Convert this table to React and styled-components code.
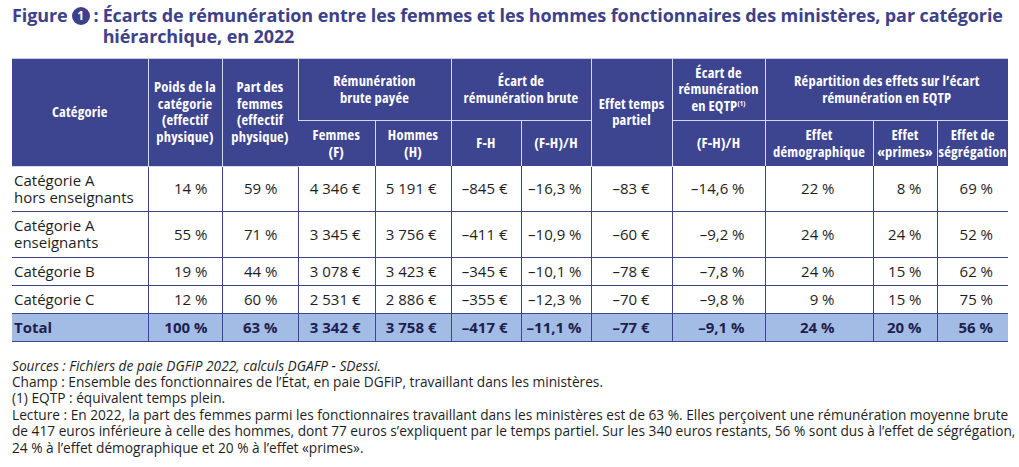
import styled, { createGlobalStyle } from "styled-components";

const NAVY = "#3d4490";
const TITLE = "#3d4189";

const GlobalStyle = createGlobalStyle`
  html, body {
    margin: 0;
    padding: 0;
    background: #ffffff;
  }
  body {
    font-family: "Open Sans", "Noto Sans", sans-serif;
    color: #1e1e1e;
  }
`;

const Page = styled.div`
  width: 1019px;
  height: 467px;
  padding: 5px 12px 0 12px;
  box-sizing: border-box;
  overflow: hidden;
`;

const Title = styled.h1`
  display: flex;
  margin: 0;
  font-size: 18px;
  line-height: 21px;
  font-weight: 700;
  color: ${TITLE};
  letter-spacing: -0.1px;
  white-space: nowrap;
`;

const TitleLabel = styled.span`
  display: flex;
  align-items: flex-start;
  gap: 4px;
  flex-shrink: 0;
`;

const Badge = styled.span`
  display: inline-flex;
  align-items: center;
  justify-content: center;
  width: 18px;
  height: 18px;
  margin-top: 2px;
  border-radius: 50%;
  background: ${TITLE};
  color: #ffffff;
  font-size: 12px;
  line-height: 1;
`;

const TitleText = styled.span`
  padding-left: 4px;
`;

const Table = styled.table`
  margin-top: 11px;
  width: 996px;
  border-collapse: collapse;
  table-layout: fixed;
`;

const HeadCell = styled.th`
  background: ${NAVY};
  color: #ffffff;
  font-family: "Open Sans", "DejaVu Sans", sans-serif;
  font-stretch: 80%;
  font-weight: 700;
  font-size: 14.5px;
  line-height: 16.5px;
  letter-spacing: 0.2px;
  text-align: center;
  vertical-align: middle;
  white-space: nowrap;
  padding: 0 1px;
  border-left: 1px solid #d5d8ee;
  border-top: 1px solid #c9cce6;
  border-bottom: ${(p) => (p.$sub ? "none" : "1px solid #d5d8ee")};
  height: ${(p) => p.$h || "auto"};

  &:first-child {
    border-left: none;
  }
`;

const Sup = styled.sup`
  font-size: 7px;
  line-height: 0;
  vertical-align: 5px;
`;

const Row = styled.tr`
  background: ${(p) => (p.$total ? "#a3bce5" : "#ffffff")};
  font-weight: ${(p) => (p.$total ? 700 : 400)};
  color: ${(p) => (p.$total ? "#1d1f4e" : "#1e1e1e")};
`;

const Cell = styled.td`
  height: ${(p) => p.$h}px;
  padding: 0 ${(p) => p.$pr}px 0 4px;
  font-size: 15px;
  line-height: 17px;
  text-align: ${(p) => (p.$left ? "left" : "right")};
  vertical-align: middle;
  white-space: nowrap;
  border-left: 1px solid ${NAVY};
  border-bottom: 1px solid ${NAVY};
  box-sizing: border-box;

  &:first-child {
    border-left: none;
    padding-left: 2px;
  }
`;

const Notes = styled.div`
  margin-top: 16px;
  font-size: 13.7px;
  line-height: 16.4px;
  color: #1e1e1e;
`;

const Note = styled.p`
  margin: 0;
  white-space: nowrap;
  font-style: ${(p) => (p.$italic ? "italic" : "normal")};
`;

const widths = [136, 74, 76, 77, 76, 70, 70, 81, 93, 108, 64, 71];
const pads = [0, 14, 20, 14, 14, 13, 9, 22, 20, 38, 15, 15];

const rows = [
  { h: 45, cells: [["Catégorie A", "hors enseignants"], "14 %", "59 %", "4 346 €", "5 191 €", "–845 €", "–16,3 %", "–83 €", "–14,6 %", "22 %", "8 %", "69 %"] },
  { h: 46, cells: [["Catégorie A", "enseignants"], "55 %", "71 %", "3 345 €", "3 756 €", "–411 €", "–10,9 %", "–60 €", "–9,2 %", "24 %", "24 %", "52 %"] },
  { h: 28, cells: ["Catégorie B", "19 %", "44 %", "3 078 €", "3 423 €", "–345 €", "–10,1 %", "–78 €", "–7,8 %", "24 %", "15 %", "62 %"] },
  { h: 28, cells: ["Catégorie C", "12 %", "60 %", "2 531 €", "2 886 €", "–355 €", "–12,3 %", "–70 €", "–9,8 %", "9 %", "15 %", "75 %"] },
  { h: 28, total: true, cells: ["Total", "100 %", "63 %", "3 342 €", "3 758 €", "–417 €", "–11,1 %", "–77 €", "–9,1 %", "24 %", "20 %", "56 %"] },
];

export default function App() {
  return (
    <Page>
      <GlobalStyle />
      <Title>
        <TitleLabel>
          Figure <Badge>1</Badge> :
        </TitleLabel>
        <TitleText>
          Écarts de rémunération entre les femmes et les hommes fonctionnaires des ministères, par catégorie
          <br />
          hiérarchique, en 2022
        </TitleText>
      </Title>

      <Table>
        <colgroup>
          {widths.map((w, i) => (
            <col key={i} style={{ width: w }} />
          ))}
        </colgroup>
        <thead>
          <tr>
            <HeadCell rowSpan={2}>Catégorie</HeadCell>
            <HeadCell rowSpan={2}>
              Poids de la
              <br />
              catégorie
              <br />
              (effectif
              <br />
              physique)
            </HeadCell>
            <HeadCell rowSpan={2}>
              Part des
              <br />
              femmes
              <br />
              (effectif
              <br />
              physique)
            </HeadCell>
            <HeadCell colSpan={2} $h="61px">
              Rémunération
              <br />
              brute payée
            </HeadCell>
            <HeadCell colSpan={2}>
              Écart de
              <br />
              rémunération brute
            </HeadCell>
            <HeadCell rowSpan={2}>
              Effet temps
              <br />
              partiel
            </HeadCell>
            <HeadCell>
              Écart de
              <br />
              rémunération
              <br />
              en EQTP<Sup>(1)</Sup>
            </HeadCell>
            <HeadCell colSpan={3}>
              Répartition des effets sur l’écart
              <br />
              rémunération en EQTP
            </HeadCell>
          </tr>
          <tr>
            <HeadCell $sub $h="45px">
              Femmes
              <br />
              (F)
            </HeadCell>
            <HeadCell $sub>
              Hommes
              <br />
              (H)
            </HeadCell>
            <HeadCell $sub>F-H</HeadCell>
            <HeadCell $sub>(F-H)/H</HeadCell>
            <HeadCell $sub>(F-H)/H</HeadCell>
            <HeadCell $sub>
              Effet
              <br />
              démographique
            </HeadCell>
            <HeadCell $sub>
              Effet
              <br />
              «primes»
            </HeadCell>
            <HeadCell $sub>
              Effet de
              <br />
              ségrégation
            </HeadCell>
          </tr>
        </thead>
        <tbody>
          {rows.map((r, ri) => (
            <Row key={ri} $total={r.total}>
              {r.cells.map((c, ci) => (
                <Cell key={ci} $h={r.h} $pr={pads[ci]} $left={ci === 0}>
                  {Array.isArray(c) ? (
                    <>
                      {c[0]}
                      <br />
                      {c[1]}
                    </>
                  ) : (
                    c
                  )}
                </Cell>
              ))}
            </Row>
          ))}
        </tbody>
      </Table>

      <Notes>
        <Note $italic>Sources : Fichiers de paie DGFiP 2022, calculs DGAFP - SDessi.</Note>
        <Note>Champ : Ensemble des fonctionnaires de l’État, en paie DGFiP, travaillant dans les ministères.</Note>
        <Note>(1) EQTP : équivalent temps plein.</Note>
        <Note>
          Lecture : En 2022, la part des femmes parmi les fonctionnaires travaillant dans les ministères est de 63 %. Elles perçoivent une rémunération moyenne brute
          <br />
          de 417 euros inférieure à celle des hommes, dont 77 euros s’expliquent par le temps partiel. Sur les 340 euros restants, 56 % sont dus à l’effet de ségrégation,
          <br />
          24 % à l’effet démographique et 20 % à l’effet «primes».
        </Note>
      </Notes>
    </Page>
  );
}
